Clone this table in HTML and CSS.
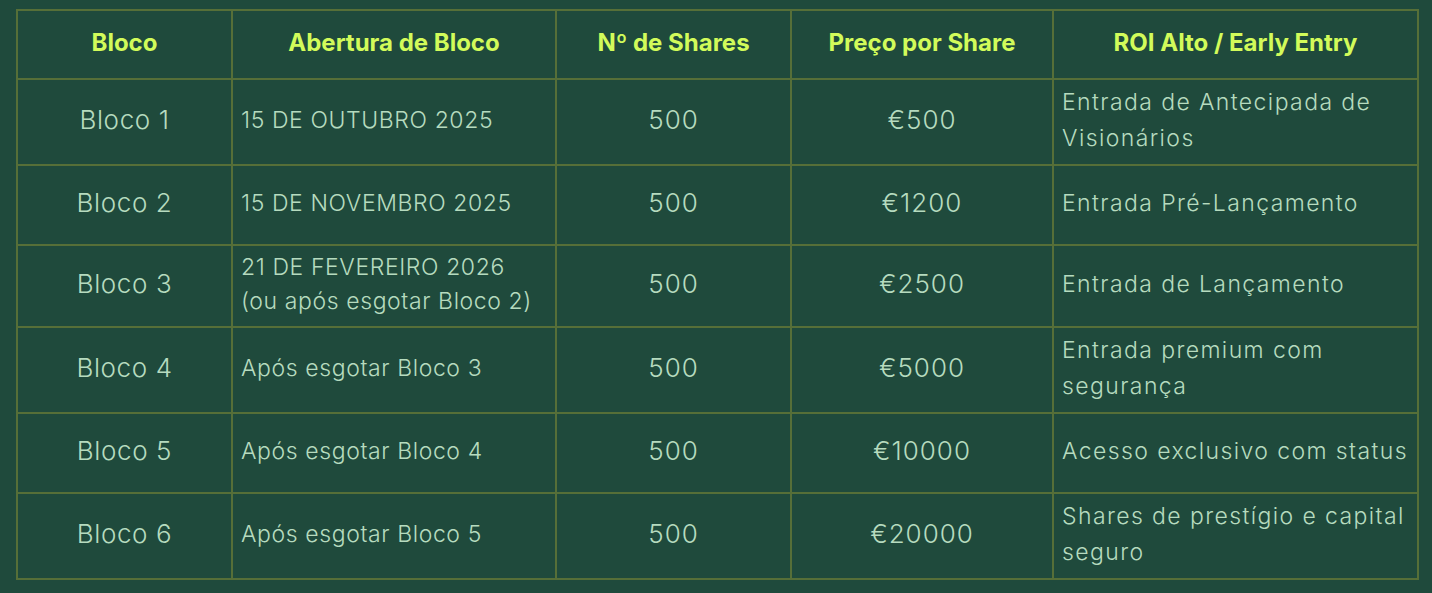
FILE: index.html
```html
<!DOCTYPE html>
<html lang="pt">
<head>
<meta charset="utf-8">
<link rel="stylesheet" href="styles.css">
</head>
<body>
<div class="wrap">
<table class="blocks">
  <colgroup>
    <col class="c1"><col class="c2"><col class="c3"><col class="c4"><col class="c5">
  </colgroup>
  <thead>
    <tr>
      <th>Bloco</th>
      <th>Abertura de Bloco</th>
      <th>Nº de Shares</th>
      <th>Preço por Share</th>
      <th>ROI Alto / Early Entry</th>
    </tr>
  </thead>
  <tbody>
    <tr>
      <td class="name">Bloco 1</td>
      <td class="date">15 DE OUTUBRO 2025</td>
      <td class="num">500</td>
      <td class="num">€500</td>
      <td class="roi">Entrada de Antecipada de Visionários</td>
    </tr>
    <tr>
      <td class="name">Bloco 2</td>
      <td class="date">15 DE NOVEMBRO 2025</td>
      <td class="num">500</td>
      <td class="num">€1200</td>
      <td class="roi">Entrada Pré-Lançamento</td>
    </tr>
    <tr>
      <td class="name">Bloco 3</td>
      <td class="date">21 DE FEVEREIRO 2026<br>(ou após esgotar Bloco 2)</td>
      <td class="num">500</td>
      <td class="num">€2500</td>
      <td class="roi">Entrada de Lançamento</td>
    </tr>
    <tr>
      <td class="name">Bloco 4</td>
      <td class="date">Após esgotar Bloco 3</td>
      <td class="num">500</td>
      <td class="num">€5000</td>
      <td class="roi">Entrada premium com segurança</td>
    </tr>
    <tr>
      <td class="name">Bloco 5</td>
      <td class="date">Após esgotar Bloco 4</td>
      <td class="num">500</td>
      <td class="num">€10000</td>
      <td class="roi">Acesso exclusivo com status</td>
    </tr>
    <tr>
      <td class="name">Bloco 6</td>
      <td class="date">Após esgotar Bloco 5</td>
      <td class="num">500</td>
      <td class="num">€20000</td>
      <td class="roi">Shares de prestígio e capital seguro</td>
    </tr>
  </tbody>
</table>
</div>
</body>
</html>
```

FILE: styles.css
```css
html, body {
  margin: 0;
  padding: 0;
  background: #1f4a3c;
}
body {
  font-family: Inter, "Noto Sans", "Liberation Sans", sans-serif;
  width: 1432px;
  height: 593px;
  overflow: hidden;
}
.wrap {
  padding: 9px 14px 0 16px;
}
.blocks {
  border-collapse: collapse;
  table-layout: fixed;
  width: 1403px;
}
.c1 { width: 215px; }
.c2 { width: 324px; }
.c3 { width: 235px; }
.c4 { width: 262px; }
.c5 { width: 365px; }
.blocks th, .blocks td {
  border: 2px solid #566f38;
  padding: 4px 8px 8px;
  vertical-align: middle;
}
.blocks th {
  height: 55px;
  padding-top: 4px;
  padding-bottom: 8px;
  color: #d2fb5a;
  font-weight: 700;
  font-size: 24px;
  text-align: center;
}
.blocks tbody tr {
  height: 80px;
}
.blocks td {
  color: #b6dbbf;
  font-weight: 300;
  line-height: 36px;
}
.name {
  text-align: center;
  font-size: 26px;
  letter-spacing: 0.6px;
}
.date {
  font-size: 23px;
  letter-spacing: 0.6px;
  line-height: 34px !important;
}
.num {
  text-align: center;
  font-size: 26px;
  letter-spacing: 1px;
}
.roi {
  font-size: 23px;
  letter-spacing: 1.4px;
}
```
